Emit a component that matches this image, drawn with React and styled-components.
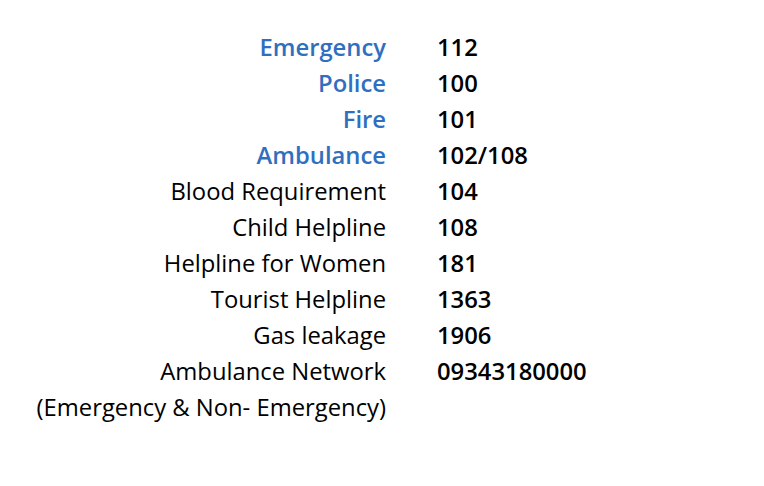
import React from 'react'
import styled, { createGlobalStyle } from 'styled-components'

const GlobalStyle = createGlobalStyle`
  body {
    margin: 0;
    background: #fff;
    font-family: "Open Sans", "Noto Sans", sans-serif;
  }
`

const Table = styled.div`
  display: grid;
  grid-template-columns: 386px auto;
  column-gap: 51px;
  padding-top: 29px;
  font-size: 23.8px;
  line-height: 36px;
`

const Label = styled.div`
  text-align: right;
  white-space: nowrap;
  color: ${props => (props.main ? '#2f6fbf' : '#000')};
  font-weight: ${props => (props.main ? 600 : 400)};
`

const Number = styled.div`
  font-weight: 600;
  color: #000;
  white-space: nowrap;
`

const rows = [
  { label: 'Emergency', number: '112', main: true },
  { label: 'Police', number: '100', main: true },
  { label: 'Fire', number: '101', main: true },
  { label: 'Ambulance', number: '102/108', main: true },
  { label: 'Blood Requirement', number: '104' },
  { label: 'Child Helpline', number: '108' },
  { label: 'Helpline for Women', number: '181' },
  { label: 'Tourist Helpline', number: '1363' },
  { label: 'Gas leakage', number: '1906' },
  { label: 'Ambulance Network', number: '09343180000' },
  { label: '(Emergency & Non- Emergency)', number: '' },
]

const App = () => (
  <>
    <GlobalStyle />
    <Table>
      {rows.map(row => (
        <React.Fragment key={row.label}>
          <Label main={row.main}>{row.label}</Label>
          <Number>{row.number}</Number>
        </React.Fragment>
      ))}
    </Table>
  </>
)

export default App
